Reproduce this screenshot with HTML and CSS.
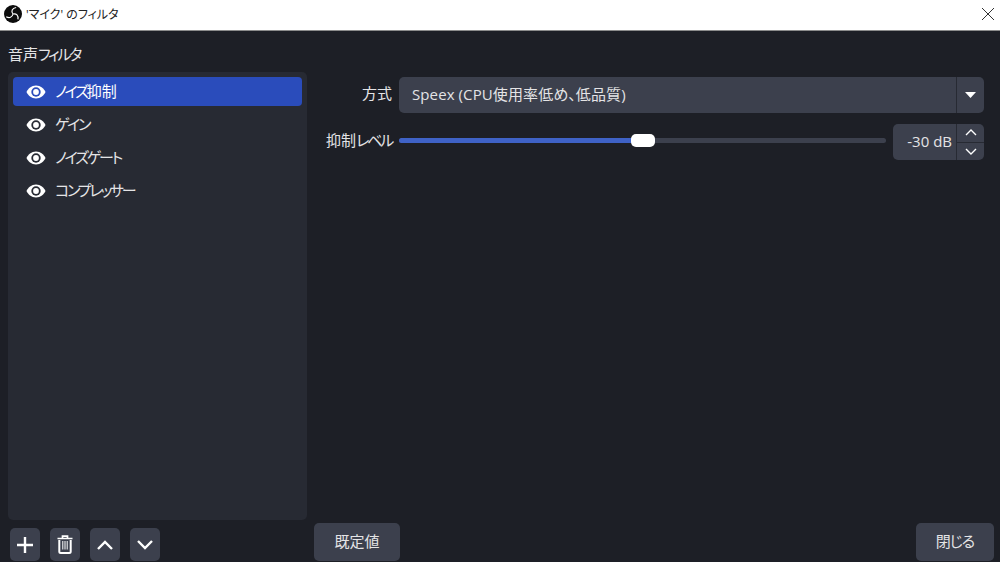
FILE: index.html
```html
<!DOCTYPE html>
<html lang="ja">
<head>
<meta charset="UTF-8" />
<title>'マイク' のフィルタ</title>
<link rel="stylesheet" href="styles.css">
</head>
<body>
  <div class="titlebar">
    <svg class="obs-logo" viewBox="0 0 20 20" width="18" height="18" aria-hidden="true">
      <circle cx="10" cy="10" r="10" fill="#0c0c0c"/>
      <path d="M10 10C7.500 7 9 3.500 13.500 2.800M10 10c3.800-.8 6.200 1.500 5.500 6M10 10c-.8 3.800-4 5-7.500 3" stroke="#fff" stroke-width="1.300" fill="none"/>
    </svg>
    <span class="title-text">'マイク' のフィルタ</span>
    <svg class="close-x" viewBox="0 0 14 14" width="14" height="14" aria-hidden="true">
      <path d="M1 1l12 12M13 1L1 13" stroke="#333" stroke-width="1" fill="none"/>
    </svg>
  </div>

  <div class="content">
    <div class="left">
      <div class="group-label">音声<span class="kana">フィルタ</span></div>
      <ul class="filter-list">
        <li class="filter selected">
          <svg class="eye" viewBox="0 0 20 14" width="20" height="14"><path d="M10 .5C5.500.5 1.800 3.800.5 7c1.300 3.200 5 6.500 9.500 6.500s8.200-3.300 9.500-6.500C18.200 3.800 14.500.5 10 .5z" fill="#fff"/><circle cx="10" cy="7" r="4.700" fill="#2a4cbb"/><circle cx="10" cy="7" r="2.900" fill="#fff"/></svg>
          <span class="filter-name"><span class="kana">ノイズ</span>抑制</span>
        </li>
        <li class="filter">
          <svg class="eye" viewBox="0 0 20 14" width="20" height="14"><path d="M10 .5C5.500.5 1.800 3.800.5 7c1.300 3.200 5 6.500 9.500 6.500s8.200-3.300 9.500-6.500C18.200 3.800 14.500.5 10 .5z" fill="#fff"/><circle cx="10" cy="7" r="4.700" fill="#272a33"/><circle cx="10" cy="7" r="2.900" fill="#fff"/></svg>
          <span class="filter-name"><span class="kana">ゲイン</span></span>
        </li>
        <li class="filter">
          <svg class="eye" viewBox="0 0 20 14" width="20" height="14"><path d="M10 .5C5.500.5 1.800 3.800.5 7c1.300 3.200 5 6.500 9.500 6.500s8.200-3.300 9.500-6.500C18.200 3.800 14.500.5 10 .5z" fill="#fff"/><circle cx="10" cy="7" r="4.700" fill="#272a33"/><circle cx="10" cy="7" r="2.900" fill="#fff"/></svg>
          <span class="filter-name"><span class="kana">ノイズゲート</span></span>
        </li>
        <li class="filter">
          <svg class="eye" viewBox="0 0 20 14" width="20" height="14"><path d="M10 .5C5.500.5 1.800 3.800.5 7c1.300 3.200 5 6.500 9.500 6.500s8.200-3.300 9.500-6.500C18.200 3.800 14.500.5 10 .5z" fill="#fff"/><circle cx="10" cy="7" r="4.700" fill="#272a33"/><circle cx="10" cy="7" r="2.900" fill="#fff"/></svg>
          <span class="filter-name"><span class="kana">コンプレッサー</span></span>
        </li>
      </ul>
      <div class="tool-row">
        <button class="tool-btn" aria-label="追加">
          <svg viewBox="0 0 18 18" width="18" height="18"><path d="M9 1v16M1 9h16" stroke="#fff" stroke-width="2.400" fill="none"/></svg>
        </button>
        <button class="tool-btn" aria-label="削除">
          <svg viewBox="0 0 16 19" width="16" height="19"><path d="M.5 3.500h15M5.500 3V1.200h5V3" stroke="#fff" stroke-width="1.700" fill="none"/><path d="M2.300 5v11.500a1.500 1.500 0 0 0 1.500 1.500h8.400a1.500 1.500 0 0 0 1.500-1.500V5" stroke="#fff" stroke-width="2" fill="none"/><path d="M5.800 6v8.500M8 6v8.500M10.200 6v8.500" stroke="#fff" stroke-width="1" fill="none"/></svg>
        </button>
        <button class="tool-btn" aria-label="上へ">
          <svg viewBox="0 0 18 12" width="18" height="12"><path d="M2 10L9 3l7 7" stroke="#fff" stroke-width="2.400" fill="none"/></svg>
        </button>
        <button class="tool-btn" aria-label="下へ">
          <svg viewBox="0 0 18 12" width="18" height="12"><path d="M2 2l7 7 7-7" stroke="#fff" stroke-width="2.400" fill="none"/></svg>
        </button>
      </div>
    </div>

    <div class="right">
      <div class="form">
        <div class="form-row first">
          <label class="form-label">方式</label>
          <div class="combo">
            <span class="combo-text">Speex (CPU使用率低め、低品質)</span>
            <span class="combo-arrow"><svg viewBox="0 0 11 6" width="11" height="6"><path d="M0 0h11L5.500 6z" fill="#fff"/></svg></span>
          </div>
        </div>
        <div class="form-row">
          <label class="form-label">抑制<span class="kana">レベル</span></label>
          <div class="slider">
            <div class="slider-fill"></div>
            <div class="slider-handle"></div>
          </div>
          <div class="spin">
            <span class="spin-value">-30 dB</span>
            <span class="spin-arrows">
              <span class="spin-arrow"><svg viewBox="0 0 12 7" width="12" height="7"><path d="M1 6l5-5 5 5" stroke="#fff" stroke-width="1.400" fill="none"/></svg></span>
              <span class="spin-arrow"><svg viewBox="0 0 12 7" width="12" height="7"><path d="M1 1l5 5 5-5" stroke="#fff" stroke-width="1.400" fill="none"/></svg></span>
            </span>
          </div>
        </div>
      </div>
      <div class="button-row">
        <button class="push-btn defaults">既定値</button>
        <button class="push-btn close">閉じる</button>
      </div>
    </div>
  </div>
</body>
</html>
```

FILE: styles.css
```css
/* Basic reset */
* {
  box-sizing: border-box;
}
html, body {
  margin: 0;
  padding: 0;
  height: 562px;
  overflow: hidden;
  background: #1d1f26;
  color: #e4e4e6;
  font-family: "Open Sans", "Noto Sans CJK JP", sans-serif;
  font-size: 15px;
  font-feature-settings: "palt";
}
body {
  display: flex;
  flex-direction: column;
}

/* Katakana in the reference font runs narrow */
.kana {
  letter-spacing: -2.2px;
}

/* Title bar */
.titlebar {
  height: 31px;
  flex-shrink: 0;
  display: flex;
  align-items: center;
  padding: 0 5px 2px 4px;
  background: #fff;
  border-bottom: 1px solid #8c8c8c;
  color: #222;
  font-size: 12px;
}
.obs-logo {
  margin-right: 4px;
}
.title-text {
  flex-grow: 1;
}

/* Main area */
.content {
  flex-grow: 1;
  display: flex;
  min-height: 0;
}
.left {
  width: 314px;
  flex-shrink: 0;
  display: flex;
  flex-direction: column;
  padding: 12px 7px 1px 8px;
}
.group-label {
  height: 22px;
  line-height: 22px;
  margin-bottom: 7px;
}

/* Filter list */
.filter-list {
  flex-grow: 1;
  list-style: none;
  margin: 0;
  padding: 5px;
  background: #272a33;
  border-radius: 5px;
}
.filter {
  height: 29px;
  margin-bottom: 4px;
  padding-left: 13px;
  display: flex;
  align-items: center;
  gap: 9px;
  border-radius: 4px;
}
.filter-name {
  padding-bottom: 2px;
}
.filter.selected {
  background: #2a4cbb;
  color: #fff;
}

/* Buttons under the list */
.tool-row {
  display: flex;
  gap: 10px;
  margin-top: 8px;
  padding-left: 2px;
}
.tool-btn {
  width: 30px;
  height: 33px;
  padding: 0;
  border: 0;
  border-radius: 5px;
  background: #3c404d;
  display: flex;
  align-items: center;
  justify-content: center;
}

/* Right side */
.right {
  flex-grow: 1;
  display: flex;
  flex-direction: column;
  padding-right: 6px;
}
.form {
  flex-grow: 1;
  padding: 46px 10px 0 11px;
}
.form-row {
  display: flex;
  align-items: center;
  margin-top: 11px;
}
.form-row.first {
  margin-top: 0;
}
.form-label {
  width: 67px;
  flex-shrink: 0;
  text-align: right;
  white-space: nowrap;
  margin-right: 7px;
  padding-bottom: 5px;
}

/* Combo box */
.combo {
  flex-grow: 1;
  height: 36px;
  display: flex;
  align-items: center;
  background: #3c404d;
  border-radius: 5px;
}
.combo-text {
  flex-grow: 1;
  padding: 0 0 3px 13px;
  letter-spacing: 0.1px;
}
.combo-arrow {
  width: 28px;
  height: 100%;
  display: flex;
  align-items: center;
  justify-content: center;
  border-left: 1px solid #272a33;
}

/* Slider */
.slider {
  position: relative;
  flex-grow: 1;
  height: 5px;
  margin: 0 7px 3px 0;
  background: #3c404d;
  border-radius: 3px;
}
.slider-fill {
  width: 50%;
  height: 100%;
  background: #3f62c6;
  border-radius: 3px;
}
.slider-handle {
  position: absolute;
  top: -4px;
  left: 232px;
  width: 24px;
  height: 13px;
  background: #fff;
  border-radius: 5px;
}

/* Spin box */
.spin {
  width: 91px;
  height: 36px;
  flex-shrink: 0;
  display: flex;
  background: #3c404d;
  border-radius: 5px;
}
.spin-value {
  flex-grow: 1;
  text-align: right;
  line-height: 35px;
  padding-right: 4px;
}
.spin-arrows {
  width: 28px;
  display: flex;
  flex-direction: column;
  border-left: 1px solid #272a33;
}
.spin-arrow {
  flex: 1;
  display: flex;
  align-items: center;
  justify-content: center;
}
.spin-arrow:first-child {
  border-bottom: 1px solid #272a33;
}

/* Bottom buttons */
.button-row {
  display: flex;
  justify-content: space-between;
  padding-bottom: 1px;
}
.push-btn {
  height: 38px;
  padding: 0 0 3px;
  border: 0;
  border-radius: 5px;
  background: #3c404d;
  color: #e4e4e6;
  font: inherit;
}
.push-btn.defaults {
  width: 86px;
}
.push-btn.close {
  width: 78px;
  letter-spacing: -1px;
}
```
